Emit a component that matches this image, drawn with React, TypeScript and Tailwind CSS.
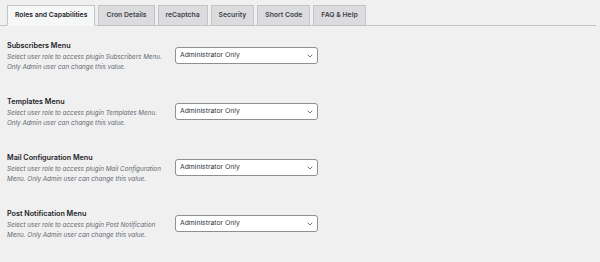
import { ChevronDown } from "lucide-react"

const tabs = [
  "Roles and Capabilities",
  "Cron Details",
  "reCaptcha",
  "Security",
  "Short Code",
  "FAQ & Help",
]

const rows = [
  {
    title: "Subscribers Menu",
    lines: [
      "Select user role to access plugin Subscribers Menu.",
      "Only Admin user can change this value.",
    ],
  },
  {
    title: "Templates Menu",
    lines: [
      "Select user role to access plugin Templates Menu.",
      "Only Admin user can change this value.",
    ],
  },
  {
    title: "Mail Configuration Menu",
    lines: [
      "Select user role to access plugin Mail Configuration",
      "Menu. Only Admin user can change this value.",
    ],
  },
  {
    title: "Post Notification Menu",
    lines: [
      "Select user role to access plugin Post Notification",
      "Menu. Only Admin user can change this value.",
    ],
  },
]

function RoleSelect() {
  return (
    <div className="relative h-[17px] w-[143px]">
      <select
        defaultValue="admin"
        className="block h-full w-full appearance-none rounded-[3px] border border-[#8c8f94] bg-white pl-[4px] text-[6.8px] leading-none text-[#2c3338]"
      >
        <option value="admin">Administrator Only</option>
        <option value="editor">Editor</option>
      </select>
      <ChevronDown
        className="pointer-events-none absolute right-[4px] top-1/2 h-[8px] w-[8px] -translate-y-1/2 text-[#50575e]"
        strokeWidth={2.4}
      />
    </div>
  )
}

export default function App() {
  return (
    <div
      className="h-[262px] w-[600px] bg-[#f0f0f1] pr-[4px] text-[#1d2327]"
      style={{ fontFamily: "Inter, 'Noto Sans', sans-serif" }}
    >
      <nav className="flex items-end gap-[3px] border-b border-[#c3c4c7] pl-[7px] pt-[5px]">
        {tabs.map((tab, i) => (
          <div
            key={tab}
            className={
              i === 0
                ? "-mb-px flex h-[21px] items-center border border-[#c3c4c7] border-b-[#f6f7f7] bg-[#f6f7f7] px-[7px] text-[6.8px] font-semibold text-[#1d2327]"
                : "-mb-px flex h-[21px] items-center border border-[#c3c4c7] bg-[#dcdcde] px-[7px] text-[6.8px] font-semibold text-[#3c434a]"
            }
          >
            {tab}
          </div>
        ))}
      </nav>

      <div className="mt-[13px] flex flex-col gap-[23px] pl-[7px]">
        {rows.map((row) => (
          <div key={row.title} className="flex items-center">
            <div className="w-[168px]">
              <div className="text-[7.2px] font-semibold leading-[13px] text-[#1d2327]">
                {row.title}
              </div>
              {row.lines.map((line) => (
                <div
                  key={line}
                  className="whitespace-nowrap text-[6.3px] italic leading-[10px] text-[#646970]"
                >
                  {line}
                </div>
              ))}
            </div>
            <RoleSelect />
          </div>
        ))}
      </div>
    </div>
  )
}
